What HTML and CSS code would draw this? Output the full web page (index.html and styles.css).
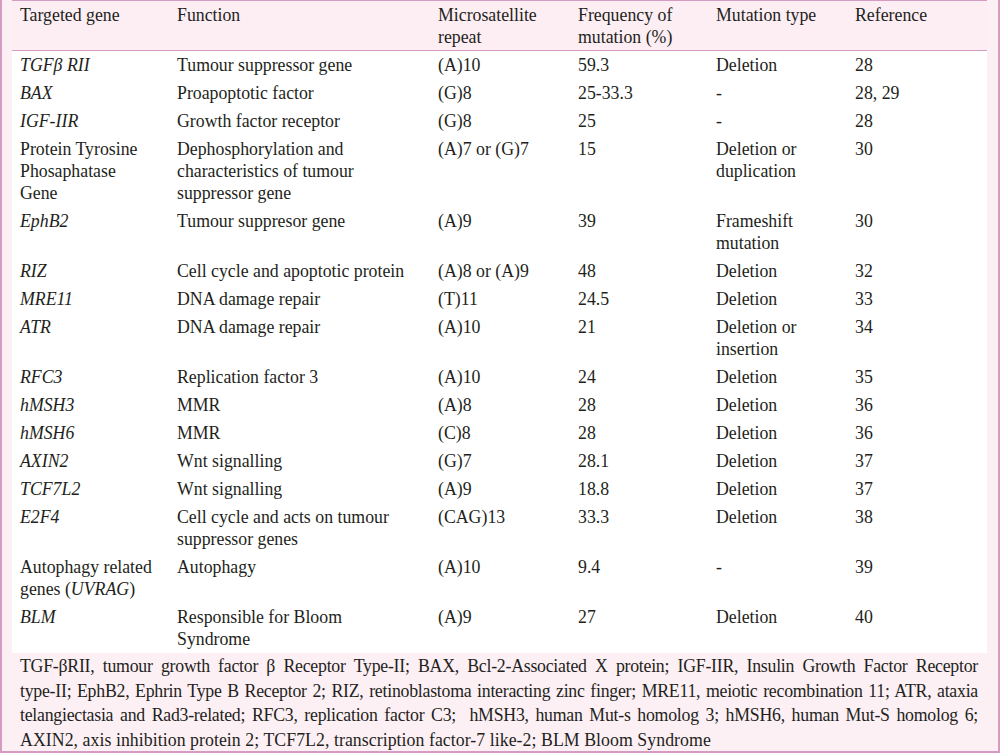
FILE: index.html
```html
<!DOCTYPE html>
<html>
<head>
<meta charset="utf-8">
<link rel="stylesheet" href="styles.css">
</head>
<body>
<div class="sheet">
  <table class="gene-table">
    <colgroup>
      <col class="c1"><col class="c2"><col class="c3"><col class="c4"><col class="c5"><col class="c6">
    </colgroup>
    <thead>
      <tr><th>Targeted gene</th><th>Function</th><th>Microsatellite repeat</th><th>Frequency of mutation (%)</th><th>Mutation type</th><th>Reference</th></tr>
    </thead>
    <tbody>
      <tr><td><i>TGFβ RII</i></td><td>Tumour suppressor gene</td><td>(A)10</td><td>59.3</td><td>Deletion</td><td>28</td></tr>
      <tr><td><i>BAX</i></td><td>Proapoptotic factor</td><td>(G)8</td><td>25-33.3</td><td>-</td><td>28, 29</td></tr>
      <tr><td><i>IGF-IIR</i></td><td>Growth factor receptor</td><td>(G)8</td><td>25</td><td>-</td><td>28</td></tr>
      <tr><td>Protein Tyrosine Phosaphatase Gene</td><td>Dephosphorylation and characteristics of tumour suppressor gene</td><td>(A)7 or (G)7</td><td>15</td><td>Deletion or duplication</td><td>30</td></tr>
      <tr><td><i>EphB2</i></td><td>Tumour suppresor gene</td><td>(A)9</td><td>39</td><td>Frameshift mutation</td><td>30</td></tr>
      <tr><td><i>RIZ</i></td><td>Cell cycle and apoptotic protein</td><td>(A)8 or (A)9</td><td>48</td><td>Deletion</td><td>32</td></tr>
      <tr><td><i>MRE11</i></td><td>DNA damage repair</td><td>(T)11</td><td>24.5</td><td>Deletion</td><td>33</td></tr>
      <tr><td><i>ATR</i></td><td>DNA damage repair</td><td>(A)10</td><td>21</td><td>Deletion or insertion</td><td>34</td></tr>
      <tr><td><i>RFC3</i></td><td>Replication factor 3</td><td>(A)10</td><td>24</td><td>Deletion</td><td>35</td></tr>
      <tr><td><i>hMSH3</i></td><td>MMR</td><td>(A)8</td><td>28</td><td>Deletion</td><td>36</td></tr>
      <tr><td><i>hMSH6</i></td><td>MMR</td><td>(C)8</td><td>28</td><td>Deletion</td><td>36</td></tr>
      <tr><td><i>AXIN2</i></td><td>Wnt signalling</td><td>(G)7</td><td>28.1</td><td>Deletion</td><td>37</td></tr>
      <tr><td><i>TCF7L2</i></td><td>Wnt signalling</td><td>(A)9</td><td>18.8</td><td>Deletion</td><td>37</td></tr>
      <tr><td><i>E2F4</i></td><td>Cell cycle and acts on tumour suppressor genes</td><td>(CAG)13</td><td>33.3</td><td>Deletion</td><td>38</td></tr>
      <tr><td>Autophagy related genes (<i>UVRAG</i>)</td><td>Autophagy</td><td>(A)10</td><td>9.4</td><td>-</td><td>39</td></tr>
      <tr><td><i>BLM</i></td><td>Responsible for Bloom Syndrome</td><td>(A)9</td><td>27</td><td>Deletion</td><td>40</td></tr>
    </tbody>
  </table>
  <div class="notes">
    <div class="note-line just">TGF-βRII, tumour growth factor β Receptor Type-II; BAX, Bcl-2-Associated X protein; IGF-IIR, Insulin Growth Factor Receptor</div>
    <div class="note-line just">type-II; EphB2, Ephrin Type B Receptor 2; RIZ, retinoblastoma interacting zinc finger; MRE11, meiotic recombination 11; ATR, ataxia</div>
    <div class="note-line just">telangiectasia and Rad3-related; RFC3, replication factor C3;&nbsp; hMSH3, human Mut-s homolog 3; hMSH6, human Mut-S homolog 6;</div>
    <div class="note-line last">AXIN2, axis inhibition protein 2; TCF7L2, transcription factor-7 like-2; BLM Bloom Syndrome</div>
  </div>
</div>
</body>
</html>
```

FILE: styles.css
```css
body {
  margin: 0;
  font-family: "Liberation Serif", "Times New Roman", serif;
  color: #231f20;
  background: #ffffff;
}
.sheet {
  width: 1000px;
  height: 753px;
  box-sizing: border-box;
  background: #fdf0f5;
  border-left: 2px solid #d79bc2;
  border-right: 2px solid #d79bc2;
  border-bottom: 2px solid #d79bc2;
  padding: 0 11px 0 10px;
}
.gene-table {
  width: 975px;
  border-collapse: collapse;
  table-layout: fixed;
  font-size: 17.8px;
  line-height: 22px;
}
.c1 { width: 157px; }
.c2 { width: 261px; }
.c3 { width: 140px; }
.c4 { width: 138px; }
.c5 { width: 139px; }
.c6 { width: 140px; }
.gene-table thead tr {
  background: #fdeef4;
  border-top: 1px solid #d79bc2;
  border-bottom: 1px solid #d79bc2;
}
.gene-table th {
  font-weight: normal;
  text-align: left;
  vertical-align: top;
  padding: 3px 14px 2px 8px;
}
.gene-table tbody {
  background: #ffffff;
}
.gene-table td {
  vertical-align: top;
  padding: 3px 14px 3px 8px;
}
.notes {
  padding: 1px 9px 0 8px;
  font-size: 17.8px;
  line-height: 24.5px;
  letter-spacing: -0.25px;
}
.note-line {
  white-space: nowrap;
}
.just {
  text-align: justify;
  text-align-last: justify;
}
.last {
  letter-spacing: 0.05px;
}
```
